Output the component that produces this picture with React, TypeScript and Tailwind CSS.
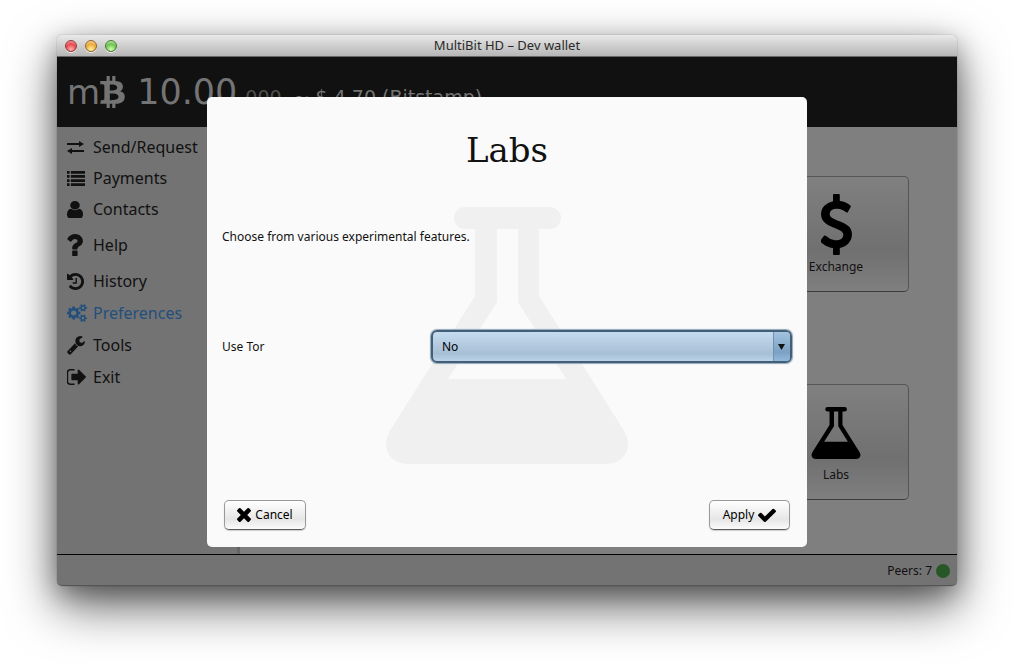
import React from "react";
import { FaBtc } from "react-icons/fa";

const PATHS = {
  exchange:
    "M17 9V11H5V13L0 10L5 7V9ZM0 2H12V0L17 3L12 6V4H0Z",
  list: "M0 160h256v256h-256zM384 160h1408v256h-1408zM0 544h256v256h-256zM384 544h1408v256h-1408zM0 928h256v256h-256zM384 928h1408v256h-1408zM0 1312h256v256h-256zM384 1312h1408v256h-1408z",
  user: "M1536 1399q0 109-62.5 187t-150.5 78h-854q-88 0-150.5-78t-62.5-187q0-85 8.5-160.5t31.5-152 58.5-131 94-89 134.5-34.5q131 128 313 128t313-128q76 0 134.5 34.5t94 89 58.5 131 31.5 152 8.5 160.5zm-256-887q0 159-112.5 271.5t-271.5 112.5-271.5-112.5-112.5-271.5 112.5-271.5 271.5-112.5 271.5 112.5 112.5 271.5z",
  help: "M1088 1256v240q0 16-12 28t-28 12h-240q-16 0-28-12t-12-28v-240q0-16 12-28t28-12h240q16 0 28 12t12 28zm316-600q0 54-15.5 101t-35 76.5-55 59.5-57.5 43.5-61 35.5q-41 23-68.5 65t-27.5 67q0 17-12 32.5t-28 15.5h-240q-15 0-25.5-18.5t-10.5-37.5v-45q0-83 65-156.5t143-108.5q59-27 84-56t25-76q0-42-46.5-74t-107.5-32q-65 0-108 29-35 25-107 115-13 16-31 16-12 0-25-8l-164-125q-13-10-15.5-25t5.5-28q160-266 464-266 80 0 161 31t146 83 106 127.5 41 158.5z",
  history:
    "M1664 896q0 156-61 298t-164 245-245 164-298 61q-172 0-327-72.5t-264-204.5q-7-10-6.5-22.5t8.5-20.5l137-138q10-9 25-9 16 2 23 12 73 95 179 147t225 52q104 0 198.5-40.5t163.5-109.5 109.5-163.5 40.5-198.5-40.5-198.5-109.5-163.5-163.5-109.5-198.5-40.5q-98 0-188 35.5t-160 101.5l137 138q31 30 14 69-17 40-59 40h-448q-26 0-45-19t-19-45v-448q0-42 40-59 39-17 69 14l130 129q107-101 244.5-156.5t284.5-55.5q156 0 298 61t245 164 164 245 61 298zm-640-288v448q0 14-9 23t-23 9h-320q-14 0-23-9t-9-23v-64q0-14 9-23t23-9h224v-352q0-14 9-23t23-9h64q14 0 23 9t9 23z",
  cogs: "M896 896q0-106-75-181t-181-75-181 75-75 181 75 181 181 75 181-75 75-181zm768 512q0-52-38-90t-90-38-90 38-38 90q0 53 37.5 90.5t90.5 37.5 90.5-37.5 37.5-90.5zm0-1024q0-52-38-90t-90-38-90 38-38 90q0 53 37.5 90.5t90.5 37.5 90.5-37.5 37.5-90.5zm-384 421v185q0 10-7 19.5t-16 10.5l-155 24q-11 35-32 76 34 48 90 115 7 11 7 20 0 12-7 19-23 30-82.5 89.5t-78.5 59.5q-11 0-21-7l-115-90q-37 19-77 31-11 108-23 155-7 24-30 24h-186q-11 0-20-7.5t-10-17.5l-23-153q-34-10-75-31l-118 89q-7 7-20 7-11 0-21-8-144-133-144-160 0-9 7-19 10-14 41-53t47-61q-23-44-35-82l-152-24q-10-1-17-9.5t-7-19.5v-185q0-10 7-19.5t16-10.5l155-24q11-35 32-76-34-48-90-115-7-11-7-20 0-12 7-20 22-30 82-89t79-59q11 0 21 7l115 90q34-18 77-32 11-108 23-154 7-24 30-24h186q11 0 20 7.5t10 17.5l23 153q34 10 75 31l118-89q8-7 20-7 11 0 21 8 144 133 144 160 0 8-7 19-12 16-42 54t-45 60q23 48 34 82l152 23q10 2 17 10.5t7 19.5zm640 533v140q0 16-149 31-12 27-30 52 51 113 51 138 0 4-4 7-122 71-124 71-8 0-46-47t-52-68q-20 2-30 2t-30-2q-14 21-52 68t-46 47q-2 0-124-71-4-3-4-7 0-25 51-138-18-25-30-52-149-15-149-31v-140q0-16 149-31 13-29 30-52-51-113-51-138 0-4 4-7 4-2 35-20t59-34 30-16q8 0 46 46.5t52 67.5q20-2 30-2t30 2q51-71 92-112l6-2q4 0 124 70 4 3 4 7 0 25-51 138 17 23 30 52 149 15 149 31zm0-1024v140q0 16-149 31-12 27-30 52 51 113 51 138 0 4-4 7-122 71-124 71-8 0-46-47t-52-68q-20 2-30 2t-30-2q-14 21-52 68t-46 47q-2 0-124-71-4-3-4-7 0-25 51-138-18-25-30-52-149-15-149-31v-140q0-16 149-31 13-29 30-52-51-113-51-138 0-4 4-7 4-2 35-20t59-34 30-16q8 0 46 46.5t52 67.5q20-2 30-2t30 2q51-71 92-112l6-2q4 0 124 70 4 3 4 7 0 25-51 138 17 23 30 52 149 15 149 31z",
  wrench:
    "M448 1472q0-26-19-45t-45-19-45 19-19 45 19 45 45 19 45-19 19-45zm644-420l-682 682q-37 37-90 37-52 0-91-37l-106-108q-38-36-38-90 0-53 38-91l681-681q39 98 114.5 173.5t173.5 114.5zm634-435q0 39-23 106-47 134-164.5 217.5t-258.5 83.5q-185 0-316.5-131.5t-131.5-316.5 131.5-316.5 316.5-131.5q58 0 121.5 16.5t107.5 46.5q16 11 16 28t-16 28l-293 169v224l193 107q5-3 79-48.5t135.5-81 70.5-35.5q15 0 23.5 10t8.5 25z",
  exit: "M704 1440q0 4 1 20t.5 26.5-3 23.5-10 19.5-20.5 6.5h-320q-119 0-203.5-84.5t-84.5-203.5v-704q0-119 84.5-203.5t203.5-84.5h320q13 0 22.5 9.5t9.5 22.5q0 4 1 20t.5 26.5-3 23.5-10 19.5-20.5 6.5h-320q-66 0-113 47t-47 113v704q0 66 47 113t113 47h312l11.5 1 11.5 3 8 5.5 7 9 2 13.5zm928-544q0 26-19 45l-544 544q-19 19-45 19t-45-19-19-45v-288h-448q-26 0-45-19t-19-45v-384q0-26 19-45t45-19h448v-288q0-26 19-45t45-19 45 19l544 544q19 19 19 45z",
  dollar:
    "M1362 1185q0 153-99.5 263.5t-258.5 136.5v175q0 14-9 23t-23 9h-135q-13 0-22.5-9.5t-9.5-22.5v-175q-66-9-127.5-31t-101.5-44.5-74-48-46.5-37.5-17.5-18q-17-21-2-41l103-135q7-10 23-12 15-2 24 9l2 2q113 99 243 125 37 8 74 8 81 0 142.5-43t61.5-122q0-28-15-53t-33.5-42-58.5-37.5-66-32-80-32.5q-39-16-61.5-25t-61.5-26.5-62.5-31-56.5-35.5-53.5-42.5-43.5-49-35.5-58-21-66.5-8.5-78q0-138 98-242t255-134v-180q0-13 9.5-22.5t22.5-9.5h135q14 0 23 9t9 23v176q57 6 110.5 23t87 33.5 63.5 37.5 39 29 15 14q17 18 5 38l-81 146q-8 15-23 16-14 3-27-7-3-3-14.5-12t-39-26.5-58.5-32-74.5-26-85.5-11.5q-95 0-155 43t-60 111q0 26 8.5 48t29.5 41.5 39.5 33 56 31 60.5 27 70 27.5q53 20 81 31.5t76 35 75.5 42.5 62 50 53 63.5 31.5 76.5 13 94z",
  times:
    "M1490 1322q0 40-28 68l-136 136q-28 28-68 28t-68-28l-294-294-294 294q-28 28-68 28t-68-28l-136-136q-28-28-28-68t28-68l294-294-294-294q-28-28-28-68t28-68l136-136q28-28 68-28t68 28l294 294 294-294q28-28 68-28t68 28l136 136q28 28 28 68t-28 68l-294 294 294 294q28 28 28 68z",
  check:
    "M1671 566q0 40-28 68l-724 724-136 136q-28 28-68 28t-68-28l-136-136-362-362q-28-28-28-68t28-68l136-136q28-28 68-28t68 28l294 295 656-657q28-28 68-28t68 28l136 136q28 28 28 68z",
};

function Icon({ name, box, className }: { name: keyof typeof PATHS; box: string; className: string }) {
  return (
    <svg viewBox={box} preserveAspectRatio="none" className={className} fill="currentColor" aria-hidden="true">
      <path d={PATHS[name]} />
    </svg>
  );
}

function Flask({ className }: { className: string }) {
  return (
    <svg viewBox="0 0 244 257" className={className} fill="currentColor" fillRule="evenodd" aria-hidden="true">
      <path d="M80 0H165A11 11 0 0 1 165 22H154V89L238 222C251 243 236 257 222 257H22C8 257-7 243 6 222L90 89V22H80A11 11 0 0 1 80 0ZM112 22V95L63 172H181L133 95V22Z" />
    </svg>
  );
}

const NAV: {
  label: string;
  icon: keyof typeof PATHS;
  box: string;
  size: string;
  row: string;
  color: string;
}[] = [
  { label: "Send/Request", icon: "exchange", box: "0 0 17 13", size: "w-[17px] h-[13px]", row: "h-8", color: "text-[#111]" },
  { label: "Payments", icon: "list", box: "0 160 1792 1408", size: "w-[18px] h-[15px]", row: "h-[30px]", color: "text-[#111]" },
  { label: "Contacts", icon: "user", box: "256 128 1280 1536", size: "w-4 h-[17px]", row: "h-8", color: "text-[#111]" },
  { label: "Help", icon: "help", box: "460 256 950 1280", size: "w-4 h-[22px]", row: "h-10", color: "text-[#111]" },
  { label: "History", icon: "history", box: "128 128 1536 1536", size: "size-[17px]", row: "h-8", color: "text-[#111]" },
  { label: "Preferences", icon: "cogs", box: "0 0 1920 1792", size: "w-5 h-[18px]", row: "h-8", color: "text-[#234f7c]" },
  { label: "Tools", icon: "wrench", box: "64 128 1664 1664", size: "w-[18px] h-[19px]", row: "h-8", color: "text-[#111]" },
  { label: "Exit", icon: "exit", box: "96 256 1536 1280", size: "w-[19px] h-4", row: "h-8", color: "text-[#111]" },
];

const CARD =
  "flex h-[116px] w-[146px] flex-col items-center gap-1 rounded-[5px] border border-[#555] border-b-[#3c3c3c] bg-linear-to-b from-[#808080] via-[#707070] via-65% to-[#7f7f7f] pt-[17px] text-xs text-[#111]";

const BUTTON =
  "flex h-[30px] items-center justify-center gap-1 rounded-[5px] border border-[#999] border-b-[#5c5c5c] bg-linear-to-b from-white via-[#e6e6e6] via-65% to-[#fbfbfb] text-xs text-black shadow-[0_1px_1px_#ccc]";

const LIGHT = "size-3 rounded-full border shadow-[0_1px_0_#eee]";

export default function App() {
  return (
    <div className="min-h-screen bg-white px-[57px] pt-[35px] pb-[78px] font-['Noto_Sans',sans-serif]">
      <div className="relative flex min-h-[551px] flex-col overflow-visible rounded-[5px] shadow-[0_20px_50px_rgba(0,0,0,0.6),0_8px_24px_rgba(0,0,0,0.3),0_0_1px_rgba(0,0,0,0.6)]">
        <header className="relative flex h-[22px] items-center justify-center rounded-t-[5px] border-b border-[#666] bg-linear-to-b from-[#e9e9e9] to-[#b6b6b6]">
          <div className="absolute left-2 flex gap-2">
            <span className={`${LIGHT} border-[#8d3a3d] bg-[radial-gradient(circle_at_50%_85%,#ffb3b0,#e8484c_55%,#f6b9b9)]`} />
            <span className={`${LIGHT} border-[#936429] bg-[radial-gradient(circle_at_50%_85%,#fff3a5,#eca93c_55%,#fbe3b5)]`} />
            <span className={`${LIGHT} border-[#467a37] bg-[radial-gradient(circle_at_50%_85%,#d6ffb0,#6fc351_55%,#d2f2c0)]`} />
          </div>
          <h1 className="text-[13px] text-[#2a2a2a]">MultiBit HD – Dev wallet</h1>
        </header>

        <div className="flex h-[70px] items-baseline whitespace-nowrap bg-[#111] pl-[10px] font-['DejaVu_Sans',sans-serif] leading-[70px] text-[#747474]">
          <span className="text-[34px]">m</span>
          <FaBtc className="h-8 w-[25px] self-center" preserveAspectRatio="none" />
          <span className="ml-3 text-[35px]">10.00</span>
          <span className="ml-2 text-[19px] text-[#505050]">000</span>
          <span className="ml-3 text-[19px]">~ $ 4.70 (Bitstamp)</span>
        </div>

        <div className="flex grow">
          <nav className="w-[183px] shrink-0 border-r-[3px] border-[#646464] bg-[#737373] pt-1 pl-[10px]">
            <ul>
              {NAV.map((item) => (
                <li key={item.label}>
                  <a href="#" className={`flex items-center whitespace-nowrap text-base ${item.row} ${item.color}`}>
                    <span className="flex w-[26px] shrink-0 items-center">
                      <Icon name={item.icon} box={item.box} className={item.size} />
                    </span>
                    {item.label}
                  </a>
                </li>
              ))}
            </ul>
          </nav>
          <main className="flex grow flex-col items-end gap-[92px] bg-[#7f7f7f] pt-[49px] pr-12 pb-[54px]">
            <button className={CARD}>
              <Icon name="dollar" box="450 0 914 1792" className="h-[61px] w-[31px] text-black" />
              <span>Exchange</span>
            </button>
            <button className={CARD}>
              <span className="flex h-[61px] items-center">
                <Flask className="h-[52px] w-[50px] text-black" />
              </span>
              <span>Labs</span>
            </button>
          </main>
        </div>

        <footer className="flex h-8 items-center justify-end gap-1 rounded-b-[5px] border-t border-b border-t-black border-b-[#555] bg-[#737373] pt-[2px] pr-[7px] text-xs text-[#111]">
          <span>Peers: 7</span>
          <span className="size-[14px] rounded-full bg-[#275727]" />
        </footer>

        <div className="absolute inset-0 flex items-start justify-center pt-[62px]">
          <section
            role="dialog"
            aria-labelledby="dialog-title"
            className="relative flex min-h-[450px] w-2/3 flex-col rounded-[5px] bg-[#fafafa] px-[15px] pt-[29px] pb-[17px] text-xs text-[#111]"
          >
            <div className="pointer-events-none absolute inset-0 flex justify-center pt-[110px]">
              <Flask className="h-[257px] w-[244px] text-[#f0f0f0]" />
            </div>
            <h2 id="dialog-title" className="relative text-center font-['DejaVu_Serif',serif] text-[34px] leading-[48px]">
              Labs
            </h2>
            <p className="relative mt-[54px] leading-[18px]">Choose from various experimental features.</p>
            <div className="relative mt-[84px] flex items-center">
              <label htmlFor="tor" className="w-[209px] shrink-0">
                Use Tor
              </label>
              <div className="relative flex grow rounded-md shadow-[0_0_1px_1px_#8fa9bc]">
                <select
                  id="tor"
                  defaultValue="No"
                  className="h-[33px] w-full appearance-none rounded-md border-2 border-[#445e77] bg-linear-to-b from-[#c5dbf0] via-[#a7bfd5] via-75% to-[#bad3e8] pl-[9px] text-black"
                >
                  <option>No</option>
                  <option>Yes</option>
                </select>
                <span className="pointer-events-none absolute inset-y-[2px] right-[2px] flex w-[17px] items-center justify-center rounded-r border-l border-[#6c93b5] bg-linear-to-b from-[#a3c3df] via-[#7ba1c4] via-70% to-[#93b9da]">
                  <svg viewBox="0 0 7 6" className="h-[6px] w-[7px]" aria-hidden="true">
                    <path d="M0 0H7L3.500 6Z" fill="#111" />
                  </svg>
                </span>
              </div>
            </div>
            <div className="relative mt-auto flex justify-between px-[2px]">
              <button className={`${BUTTON} w-[82px]`}>
                <Icon name="times" box="302 366 1188 1188" className="size-[14px]" />
                Cancel
              </button>
              <button className={`${BUTTON} w-[81px]`}>
                Apply
                <Icon name="check" box="121 270 1550 1252" className="h-[14px] w-[18px]" />
              </button>
            </div>
          </section>
        </div>
      </div>
    </div>
  );
}
